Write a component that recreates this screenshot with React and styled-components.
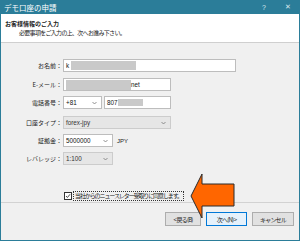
import React from "react";
import styled, { createGlobalStyle } from "styled-components";

const GlobalStyle = createGlobalStyle`
  html, body {
    margin: 0;
    padding: 0;
    background: #ffffff;
  }
`;

const Window = styled.div`
  position: relative;
  width: 300px;
  height: 241px;
  box-sizing: border-box;
  border: 1px solid #2b7d99;
  border-top: none;
  background: #f0f0f0;
  display: flex;
  flex-direction: column;
  font-family: "Noto Sans CJK JP", "Liberation Sans", sans-serif;
  color: #1a1a1a;
  overflow: hidden;
`;

const TitleBar = styled.div`
  height: 14px;
  flex-shrink: 0;
  margin: 0 -1px;
  background: #2b7d99;
  color: #ffffff;
  display: flex;
  align-items: center;
  padding: 0 0 0 4px;
  font-size: 7.5px;
  .title {
    flex: 1;
  }
  .ctl {
    width: 24px;
    text-align: center;
    font-family: "Liberation Sans", sans-serif;
    font-size: 7px;
    color: #d8e8ee;
  }
`;

const Header = styled.div`
  height: 28px;
  flex-shrink: 0;
  box-sizing: content-box;
  background: #ffffff;
  border-bottom: 1px solid #cfcfcf;
  .head {
    font-size: 6px;
    font-weight: 700;
    line-height: 8px;
    margin: 6px 0 0 4px;
  }
  .sub {
    font-size: 6px;
    letter-spacing: -0.7px;
    line-height: 8px;
    margin: 1px 0 0 18px;
  }
`;

const Body = styled.div`
  flex: 1;
  padding-top: 16px;
`;

const Row = styled.div`
  display: flex;
  align-items: center;
  height: 13px;
  margin-top: ${(p) => p.$top || 0}px;
`;

const Label = styled.div`
  width: 61px;
  margin-right: 1px;
  text-align: right;
  font-size: 6px;
  color: #222;
`;

const Field = styled.div`
  position: relative;
  box-sizing: border-box;
  width: ${(p) => p.$w}px;
  height: 13px;
  margin-right: ${(p) => p.$mr || 0}px;
  border: 1px solid ${(p) => (p.$disabled ? "#cccccc" : "#bdbdbd")};
  background: ${(p) => (p.$disabled ? "#e6e6e6" : "#ffffff")};
  display: flex;
  align-items: center;
  padding-left: 2px;
  font-family: "Liberation Sans", sans-serif;
  font-size: 6.3px;
  color: ${(p) => (p.$disabled ? "#333" : "#111")};
`;

const Blur = styled.span`
  display: inline-block;
  width: ${(p) => p.$w}px;
  height: ${(p) => p.$h || 9}px;
  background: #c9c9c9;
  margin-left: ${(p) => p.$ml || 0}px;
`;

const Chevron = styled.svg`
  position: absolute;
  right: 4px;
  top: 4px;
`;

const Unit = styled.span`
  margin-left: 4px;
  font-family: "Liberation Sans", sans-serif;
  font-size: 6px;
`;

const CheckRow = styled.div`
  display: flex;
  align-items: center;
  margin: 26px 0 0 63px;
  height: 10px;
`;

const Box = styled.div`
  width: 6px;
  height: 6px;
  border: 1px solid #333;
  background: #fff;
  margin-right: 1px;
  display: flex;
  align-items: center;
  justify-content: center;
`;

const CheckText = styled.span`
  display: inline-block;
  box-sizing: border-box;
  width: 111px;
  white-space: nowrap;
  border: 1px dotted #333;
  padding: 0 1px;
  font-size: 6px;
  letter-spacing: -1.1px;
  line-height: 8px;
`;

const Footer = styled.div`
  height: 28px;
  flex-shrink: 0;
  border-top: 1px solid #d2d2d2;
  display: flex;
  justify-content: flex-end;
  align-items: flex-start;
  gap: 5px;
  padding: 9px 5px 0 0;
`;

const Button = styled.div`
  box-sizing: border-box;
  width: ${(p) => p.$w}px;
  height: 14px;
  border: 1px solid ${(p) => (p.$primary ? "#0078d7" : "#adadad")};
  background: ${(p) => (p.$primary ? "#e5f1fb" : "#e1e1e1")};
  display: flex;
  align-items: center;
  justify-content: center;
  font-size: 6px;
  letter-spacing: -0.8px;
  color: #222;
`;

const Arrow = styled.svg`
  position: absolute;
  left: 186px;
  top: 170px;
`;

const Down = () => (
  <Chevron width="5" height="4" viewBox="0 0 5 4">
    <path d="M0.5 1 L2.5 3 L4.5 1" fill="none" stroke="#777" strokeWidth="0.8" />
  </Chevron>
);

export default function App() {
  return (
    <>
      <GlobalStyle />
      <Window>
        <TitleBar>
          <span className="title">デモ口座の申請</span>
          <span className="ctl">?</span>
          <span className="ctl">✕</span>
        </TitleBar>
        <Header>
          <div className="head">お客様情報のご入力</div>
          <div className="sub">必要事項をご入力の上、次へお進み下さい。</div>
        </Header>
        <Body>
          <Row>
            <Label>お名前：</Label>
            <Field $w={173}>
              k<Blur $w={65} $ml={2} />
            </Field>
          </Row>
          <Row $top={6}>
            <Label>E-メール：</Label>
            <Field $w={108}>
              <Blur $w={65} $h={10} />
              net
            </Field>
          </Row>
          <Row $top={5}>
            <Label>電話番号：</Label>
            <Field $w={39} $mr={2}>
              +81
              <Down />
            </Field>
            <Field $w={67}>
              807
              <Blur $w={25} $h={7} />
            </Field>
          </Row>
          <Row $top={7}>
            <Label>口座タイプ：</Label>
            <Field $w={108} $disabled>
              forex-jpy
              <Down />
            </Field>
          </Row>
          <Row $top={5}>
            <Label>証拠金：</Label>
            <Field $w={50}>
              5000000
              <Down />
            </Field>
            <Unit>JPY</Unit>
          </Row>
          <Row $top={5}>
            <Label>レバレッジ：</Label>
            <Field $w={50} $disabled>
              1:100
              <Down />
            </Field>
          </Row>
          <CheckRow>
            <Box>
              <svg width="6" height="6" viewBox="0 0 6 6">
                <path d="M1 3 L2.4 4.5 L5 1.3" fill="none" stroke="#333" strokeWidth="0.9" />
              </svg>
            </Box>
            <CheckText>当社からのニュースレター受取りに同意します。</CheckText>
          </CheckRow>
        </Body>
        <Footer>
          <Button $w={36}>&lt; 戻る(B)</Button>
          <Button $w={41} $primary>次へ(N) &gt;</Button>
          <Button $w={42}>キャンセル</Button>
        </Footer>
        <Arrow width="50" height="52" viewBox="0 0 50 52">
          <polygon
            points="4,26 15,4 15,14 47,14 47,36 15,36 15,48"
            fill="#ff6600"
            stroke="#2a2a2a"
            strokeWidth="1"
            strokeLinejoin="miter"
          />
        </Arrow>
      </Window>
    </>
  );
}
